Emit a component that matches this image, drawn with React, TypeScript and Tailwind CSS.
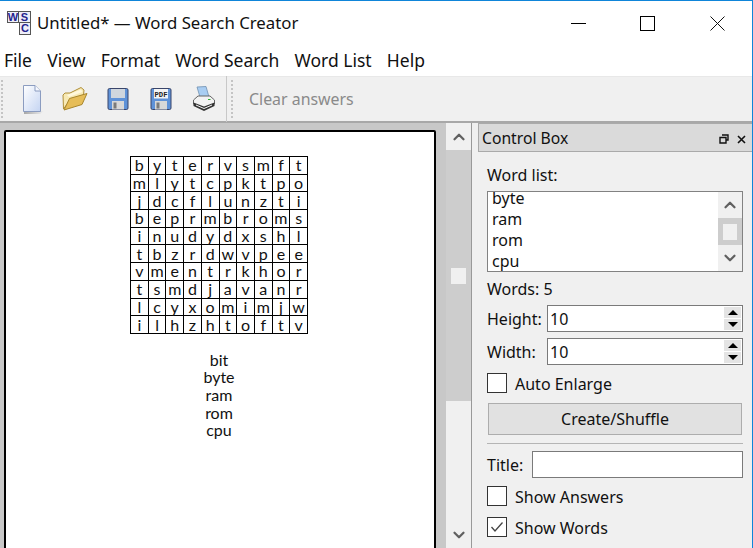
import { ChevronUp, ChevronDown } from "lucide-react";

const grid = [
  "bytervsmft",
  "mlytcpktpo",
  "jdcflunzti",
  "beprmbroms",
  "inudydxshl",
  "tbzrdwvpee",
  "vmentrkhor",
  "tsmdjavanr",
  "lcyxomimjw",
  "ilhzhtoftv",
];

const menus = ["File", "View", "Format", "Word Search", "Word List", "Help"];

function Logo() {
  return (
    <div className="grid h-[24px] w-[24px] grid-cols-2 grid-rows-2 font-['Liberation_Sans',sans-serif] text-[11px] leading-none font-bold text-[#23238e]">
      <div className="flex items-center justify-center border border-[#555] bg-[#eeeef8]">W</div>
      <div className="flex items-center justify-center border border-l-0 border-[#555] bg-[#eeeef8]">S</div>
      <div />
      <div className="flex items-center justify-center border border-t-0 border-[#555] bg-[#eeeef8]">C</div>
    </div>
  );
}

function NewIcon() {
  return (
    <svg width="26" height="30" viewBox="0 0 26 30">
      <defs>
        <linearGradient id="pg" x1="0" y1="0" x2="1" y2="1">
          <stop offset="0" stopColor="#ffffff" />
          <stop offset="1" stopColor="#c4d4f2" />
        </linearGradient>
        <linearGradient id="sh" x1="0" y1="0" x2="1" y2="0">
          <stop offset="0" stopColor="#888" stopOpacity="0.7" />
          <stop offset="1" stopColor="#888" stopOpacity="0" />
        </linearGradient>
      </defs>
      <path d="M4 27 H24 L20 30 H4Z" fill="url(#sh)" />
      <path d="M3.5 1.5H15L20.5 7V27.5H3.5Z" fill="url(#pg)" stroke="#8b9cc0" />
      <path d="M15 1.5V7H20.5" fill="#f6f8fe" stroke="#8b9cc0" />
    </svg>
  );
}

function OpenIcon() {
  return (
    <svg width="26" height="26" viewBox="0 0 26 26">
      <path d="M1.5 23 L1 9 L3 7 L8 7 L19 1.5 L22 4 L21.5 9 L8 14Z" fill="#f7e9b4" stroke="#b08f38" />
      <path d="M5 9 L19 3.5 L20.5 6 L7 11Z" fill="#fff8dc" />
      <path d="M2 24 L7.5 12.5 L25 7.5 L20 18.5 Z" fill="#e6bd58" stroke="#a8862c" />
    </svg>
  );
}

function DiskIcon({ pdf }: { pdf?: boolean }) {
  return (
    <svg width="22" height="24" viewBox="0 0 22 24">
      <rect x="1" y="1.5" width="20" height="21" rx="1.5" fill="#5f92d8" stroke="#39456a" />
      <rect x="4" y="2" width="14" height={pdf ? 9.5 : 9} fill={pdf ? "#f4f4f4" : "#cfd6de"} />
      {pdf && (
        <text x="11" y="10" textAnchor="middle" fontSize="8" fontWeight="700" fontFamily="Liberation Mono, monospace" textLength="13" lengthAdjust="spacingAndGlyphs" fill="#222">
          PDF
        </text>
      )}
      <rect x="5" y="14" width="12" height="8.5" fill="#d8d8d8" />
      <rect x="6.5" y="15.5" width="3" height="6" fill="#7a7a7a" />
    </svg>
  );
}

function PrintIcon() {
  return (
    <svg width="24" height="26" viewBox="0 0 24 26">
      <path d="M5 1 L14 0.5 L17 11 L8 11Z" fill="#a9cdf2" stroke="#6f8fb0" strokeWidth="0.8" />
      <path d="M1.5 14 L6 10 L18 10 L22.5 14 V18 L12 22 L1.5 18Z" fill="#f2f2f2" stroke="#666" />
      <path d="M1.5 16.5 L12 20.5 L22.5 16.5 V20 L12 25 L1.5 20Z" fill="#333" />
      <path d="M4 19 L12 22.5 L20 19" fill="none" stroke="#f4f4f4" />
      <path d="M16 13.5 h2.5" stroke="#3a3" />
    </svg>
  );
}

function Grip() {
  return <div className="h-[38px] w-[2px] border-l-2 border-dotted border-[#c4c4c4]" />;
}

function Spin({ value }: { value: string }) {
  return (
    <div className="flex h-[27px] flex-1 items-center border border-[#7a7a7a] bg-white pr-[1px] pl-[2px]">
      <span className="flex-1">{value}</span>
      <div className="flex h-[23px] w-[17px] flex-col gap-[1px]">
        <div className="flex flex-1 items-center justify-center bg-[#e4e4e4]">
          <div className="h-0 w-0 border-x-[5px] border-b-[5px] border-x-transparent border-b-black" />
        </div>
        <div className="flex flex-1 items-center justify-center bg-[#e4e4e4]">
          <div className="h-0 w-0 border-x-[5px] border-t-[5px] border-x-transparent border-t-black" />
        </div>
      </div>
    </div>
  );
}

function Check({ label, checked }: { label: string; checked?: boolean }) {
  return (
    <div className="flex items-center gap-[8px]">
      <div className="flex h-[20px] w-[20px] items-center justify-center border border-[#333] bg-white">
        {checked && (
          <svg width="14" height="12" viewBox="0 0 14 12">
            <path d="M1.5 6 L5 10 L12.5 1.5" fill="none" stroke="#444" strokeWidth="1.3" />
          </svg>
        )}
      </div>
      <span className="pt-[2px]">{label}</span>
    </div>
  );
}

export default function App() {
  return (
    <div className="flex h-[548px] w-[753px] flex-col overflow-hidden border-t border-r border-[#0f85d9] bg-white font-['Noto_Sans',sans-serif] text-[16px] text-[#111]">
      {/* Title bar */}
      <div className="flex h-[41px] shrink-0 items-center pt-[3px] pl-[7px]">
        <Logo />
        <span className="ml-[6px] text-[16.8px]">Untitled* — Word Search Creator</span>
        <div className="ml-auto flex items-center">
          <div className="h-[1px] w-[15px] bg-black" />
          <div className="ml-[54px] h-[15px] w-[15px] border border-black" />
          <svg className="mr-[27px] ml-[55px]" width="15" height="15" viewBox="0 0 15 15">
            <path d="M0.5 0.5 L14.5 14.5 M14.5 0.5 L0.5 14.5" stroke="#111" />
          </svg>
        </div>
      </div>

      {/* Menu bar */}
      <div className="flex h-[34px] shrink-0 items-center gap-[15.2px] pt-[2px] pl-[4px] text-[17.5px]">
        {menus.map((m) => (
          <span key={m}>{m}</span>
        ))}
      </div>

      {/* Toolbar */}
      <div className="flex h-[47px] shrink-0 items-center border-t border-b-2 border-t-[#e8e8e8] border-b-[#a8a8a8] bg-[#f0f0f0] pl-[1px]">
        <Grip />
        <div className="ml-[8px] flex items-center">
          <div className="flex w-[43px] justify-center"><NewIcon /></div>
          <div className="flex w-[42px] justify-center"><OpenIcon /></div>
          <div className="flex w-[44px] justify-center"><DiskIcon /></div>
          <div className="flex w-[42px] justify-center"><DiskIcon pdf /></div>
          <div className="flex w-[43px] justify-center"><PrintIcon /></div>
        </div>
        <div className="mr-[4px] ml-[1px] h-[46px] w-[1px] bg-[#c8c8c8]" />
        <Grip />
        <span className="ml-[16px] pt-[2px] text-[15.9px] text-[#8a8a8a]">Clear answers</span>
      </div>

      {/* Main */}
      <div className="flex min-h-0 flex-1">
        {/* Canvas */}
        <div className="flex w-[446px] bg-[#c8c8c8] pt-[7px] pl-[4px]">
          <div className="flex h-[500px] w-[432px] flex-col items-center rounded-t-[2px] border-2 border-black bg-white pt-[24px] pr-[2px] font-['Lato',sans-serif] text-[16px]">
            <div className="grid w-[178px] grid-cols-10 border-t border-l border-black">
              {grid.join("").split("").map((c, i) => (
                <div key={i} className="flex h-[17.7px] items-center justify-center border-r border-b border-black leading-none">
                  {c}
                </div>
              ))}
            </div>
            <div className="mt-[17px] flex flex-col items-center leading-[17.6px]">
              {["bit", "byte", "ram", "rom", "cpu"].map((w) => (
                <span key={w}>{w}</span>
              ))}
            </div>
          </div>
        </div>

        {/* Canvas scrollbar */}
        <div className="flex w-[25px] flex-col bg-[#f0f0f0] text-[#606060]">
          <div className="flex h-[27px] shrink-0 items-center justify-center pt-[1px]">
            <ChevronUp size={18} strokeWidth={3} />
          </div>
          <div className="flex h-[251px] shrink-0 items-center justify-center bg-[#cdcdcd]">
            <div className="h-[16px] w-[15px] bg-[#f0f0f0]" />
          </div>
          <div className="flex-1" />
          <div className="flex h-[26px] shrink-0 items-center justify-center">
            <ChevronDown size={18} strokeWidth={3} />
          </div>
        </div>

        {/* Control box */}
        <div className="flex flex-1 flex-col border-l border-[#999] bg-[#f0f0f0] pl-[6px]">
          <div className="flex h-[29px] shrink-0 items-center border border-r-0 border-[#aaa] bg-[#dadada] pt-[3px] pr-[6px] pl-[3px]">
            <span className="text-[15.7px]">Control Box</span>
            <svg className="mr-[8px] ml-auto" width="10" height="10" viewBox="0 0 10 10">
              <path d="M3 1H9V6H7M1 3.5H7V9H1Z" fill="none" stroke="#111" strokeWidth="1.4" />
            </svg>
            <svg width="9" height="9" viewBox="0 0 9 9">
              <path d="M1 1L8 8M8 1L1 8" stroke="#111" strokeWidth="1.6" />
            </svg>
          </div>
          <div className="flex flex-col pr-[9px] pl-[9px]">
            <div className="mt-[11px]">Word list:</div>
            <div className="mt-[4px] flex h-[81px] overflow-hidden border border-[#828282] bg-white">
              <div className="-mt-[4px] flex-1 pl-[4px] leading-[21px]">
                <div>byte</div>
                <div>ram</div>
                <div>rom</div>
                <div>cpu</div>
              </div>
              <div className="flex w-[24px] flex-col bg-[#f0f0f0] text-[#606060]">
                <div className="flex h-[26px] items-center justify-center">
                  <ChevronUp size={18} strokeWidth={3} />
                </div>
                <div className="flex h-[27px] items-center justify-center bg-[#cdcdcd]">
                  <div className="h-[16px] w-[14px] bg-[#f0f0f0]" />
                </div>
                <div className="flex flex-1 items-center justify-center">
                  <ChevronDown size={18} strokeWidth={3} />
                </div>
              </div>
            </div>
            <div className="mt-[5px]">Words: 5</div>
            <div className="mt-[4px] flex items-center gap-[6px]">
              <span className="w-[54px]">Height:</span>
              <Spin value="10" />
            </div>
            <div className="mt-[6px] flex items-center gap-[6px]">
              <span className="w-[54px]">Width:</span>
              <Spin value="10" />
            </div>
            <div className="mt-[5px]">
              <Check label="Auto Enlarge" />
            </div>
            <button className="mx-[1px] mt-[7px] h-[32px] border border-[#adadad] bg-[#e1e1e1]">Create/Shuffle</button>
            <div className="mt-[8px] h-[1px] bg-[#b5b5b5]" />
            <div className="mt-[7px] flex items-center">
              <span className="w-[45px]">Title:</span>
              <div className="h-[27px] flex-1 border border-[#7a7a7a] bg-white" />
            </div>
            <div className="mt-[5px]">
              <Check label="Show Answers" />
            </div>
            <div className="mt-[5px]">
              <Check label="Show Words" checked />
            </div>
          </div>
        </div>
      </div>
    </div>
  );
}
